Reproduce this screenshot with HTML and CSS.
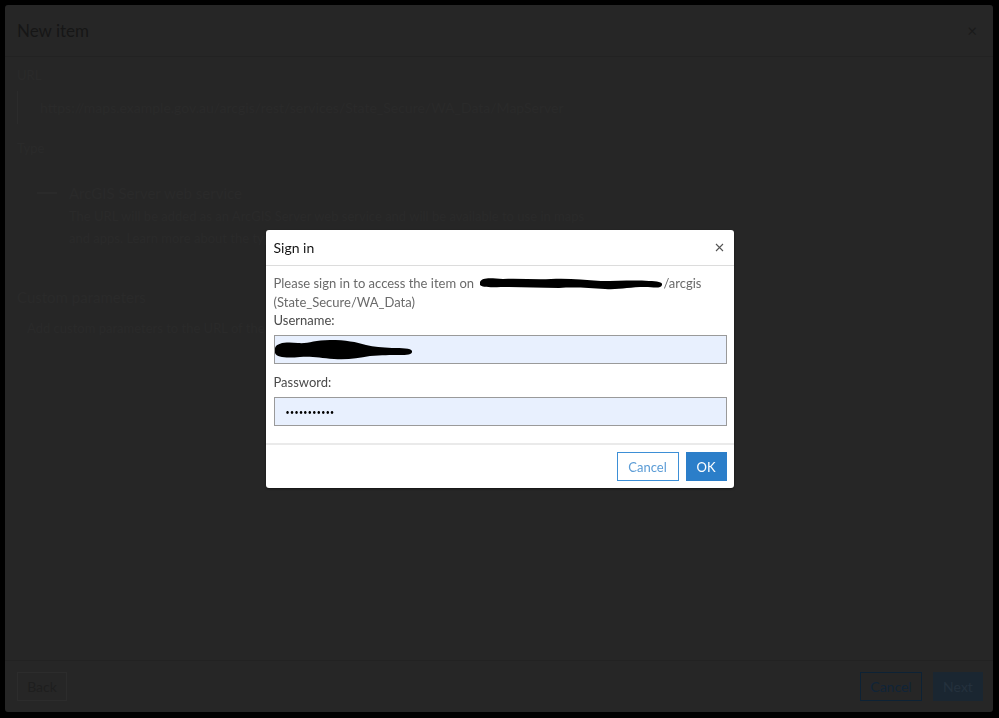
FILE: index.html
```html
<!DOCTYPE html>
<html lang="en">
  <head>
    <meta charset="UTF-8" />
    <meta name="viewport" content="width=device-width, initial-scale=1.0" />
    <title>New item</title>
    <link rel="stylesheet" href="styles.css">
  </head>
  <body>
    <div class="panel">
      <div class="panel-header">
        <h2>New item</h2>
        <span class="panel-close">&times;</span>
      </div>
      <div class="panel-body">
        <div class="label">URL</div>
        <div class="url-box">https://maps.example.gov.au/arcgis/rest/services/State_Secure/WA_Data/MapServer</div>
        <div class="label">Type</div>
        <div class="type-row">
          <span class="radio"></span>
          <div>
            <div class="type-title">ArcGIS Server web service</div>
            <div class="type-desc">The URL will be added as an ArcGIS Server web service and will be available to use in maps</div>
            <div class="type-desc">and apps. Learn more about the type of item added.</div>
          </div>
        </div>
        <div class="label section">Custom parameters</div>
        <div class="type-desc plain">Add custom parameters to the URL of the item and specify whether to store them with it.</div>
      </div>
      <div class="panel-footer">
        <button class="ghost back">Back</button>
        <div class="spacer"></div>
        <button class="ghost blue">Cancel</button>
        <button class="solid">Next</button>
      </div>
    </div>

    <div class="backdrop">
      <div class="modal">
        <div class="modal-header">
          <span>Sign in</span>
          <svg class="modal-close" width="9" height="9" viewBox="0 0 9 9"><path d="M1 1 L8 8 M8 1 L1 8" stroke="#555" stroke-width="1.1" fill="none"/></svg>
        </div>
        <div class="modal-body">
          <p class="message">
            Please sign in to access the item on
            <svg class="scribble" width="184" height="16" viewBox="0 0 184 16"><path d="M1 7 C 3 2, 12 3, 24 4 C 40 3, 56 5, 72 4 C 90 3, 104 5, 122 6 C 140 6, 156 5, 170 6 C 178 6, 184 7, 183 10 C 182 14, 174 12, 166 12 C 150 12, 140 15, 126 14 C 110 13, 96 12, 80 13 C 62 13, 46 12, 30 12 C 16 12, 3 13, 1 10 Z" fill="#000"/></svg>/arcgis<br>
            (State_Secure/WA_Data)
          </p>
          <label for="username">Username:</label>
          <div class="field">
            <input id="username" type="text" value="">
            <svg class="blob" width="140" height="22" viewBox="0 0 140 22"><path d="M1 9 C 3 3, 14 3, 24 4 C 34 5, 40 1, 56 1 C 72 1, 82 3, 92 6 C 100 8, 108 8, 118 9 C 128 9, 137 9, 138 12 C 139 16, 132 16, 126 16 C 116 16, 108 16, 96 17 C 84 19, 74 21, 60 20 C 46 19, 38 17, 26 18 C 14 19, 3 19, 1 14 Z" fill="#000"/></svg>
          </div>
          <label for="password">Password:</label>
          <div class="field">
            <input id="password" class="secret" type="password" value="abcdefghijk">
          </div>
        </div>
        <div class="modal-footer">
          <button class="btn-outline">Cancel</button>
          <button class="btn-primary">OK</button>
        </div>
      </div>
    </div>
  </body>
</html>
```

FILE: styles.css
```css
html,
body {
  height: 100%;
}

body {
  margin: 0;
  padding: 5px 6px 6px 5px;
  box-sizing: border-box;
  background: #000;
  font-family: Lato, "Open Sans", sans-serif;
  display: flex;
}

.panel {
  flex: 1;
  background: #262626;
  border-radius: 3px;
  display: flex;
  flex-direction: column;
}

.panel-header {
  height: 51px;
  border-bottom: 1px solid #222;
  display: flex;
  align-items: center;
  padding: 0 16px 0 12px;
}

.panel-header h2 {
  flex: 1;
  margin: 0;
  font-size: 17px;
  font-weight: 400;
  color: #161616;
}

.panel-close {
  font-size: 17px;
  color: #1a1a1a;
}

.panel-body {
  flex: 1;
  padding: 10px 12px;
  color: #2a2a2a;
  font-size: 13px;
}

.label {
  margin-bottom: 8px;
}

.label.section {
  margin-top: 36px;
  font-size: 15px;
}

.url-box {
  border-left: 1px solid #2b2b2b;
  padding: 8px 22px;
  margin-bottom: 16px;
  font-size: 14px;
}

.type-row {
  display: flex;
  gap: 12px;
  padding: 20px 0 0 20px;
}

.radio {
  width: 20px;
  height: 2px;
  margin-top: 8px;
  background: #2a2a2a;
}

.type-title {
  font-size: 15px;
  margin-bottom: 6px;
}

.type-desc {
  margin-bottom: 6px;
}

.type-desc.plain {
  margin-top: 14px;
  padding-left: 10px;
}

.panel-footer {
  height: 51px;
  border-top: 1px solid #222;
  display: flex;
  align-items: center;
  gap: 11px;
  padding: 0 10px 0 12px;
}

.spacer {
  flex: 1;
}

.panel-footer button {
  height: 29px;
  padding: 0;
  font-family: inherit;
  font-size: 14px;
  border-radius: 0;
}

.ghost {
  width: 50px;
  background: transparent;
  border: 1px solid #2c2c2c;
  color: #1e1e1e;
}

.ghost.blue {
  width: 62px;
  border-color: #0d2235;
  color: #102438;
}

.solid {
  width: 50px;
  background: #1a2631;
  border: 1px solid #1a2631;
  color: #24313d;
}

.backdrop {
  position: fixed;
  inset: 0;
  display: flex;
  align-items: center;
  justify-content: center;
}

.modal {
  width: 468px;
  background: #fff;
  border-radius: 3px;
  box-shadow: 0 1px 2px rgba(0, 0, 0, 0.5);
}

.modal-header {
  height: 35px;
  border-bottom: 1px solid #dcdcdc;
  display: flex;
  align-items: center;
  justify-content: space-between;
  padding: 0 10px 0 8px;
  font-size: 14px;
  color: #151515;
}

.modal-body {
  padding: 8px 7px 17px 8px;
  font-size: 13px;
}

.message {
  margin: 0;
  line-height: 19px;
  color: #6a6a6a;
}

.scribble {
  vertical-align: -3px;
  margin-left: 2px;
}

label {
  display: block;
  color: #4a4a4a;
  line-height: 17px;
  margin-bottom: 6px;
}

.field {
  position: relative;
  margin-bottom: 10px;
}

.field:last-child {
  margin-bottom: 0;
}

.field input {
  display: block;
  width: 100%;
  height: 29px;
  box-sizing: border-box;
  margin: 0;
  padding: 0 11px;
  border: 1px solid #9a9a9a;
  background: #e8f0fe;
  font-family: inherit;
  font-size: 13px;
  color: #000;
  outline: none;
}

.field input.secret {
  font-size: 7px;
  letter-spacing: 0.4px;
}

.blob {
  position: absolute;
  left: 0;
  top: 4px;
}

.modal-footer {
  border-top: 2px solid #eaeaea;
  display: flex;
  justify-content: flex-end;
  gap: 7px;
  padding: 7px 7px 7px 8px;
}

.modal-footer button {
  height: 29px;
  font-family: inherit;
  font-size: 13px;
  border-radius: 0;
  cursor: pointer;
}

.btn-outline {
  width: 62px;
  background: #fff;
  border: 1px solid #3d8fd6;
  color: #5b9cd6;
}

.btn-primary {
  width: 41px;
  background: #2b7ec9;
  border: 1px solid #2b7ec9;
  color: #fff;
}
```
